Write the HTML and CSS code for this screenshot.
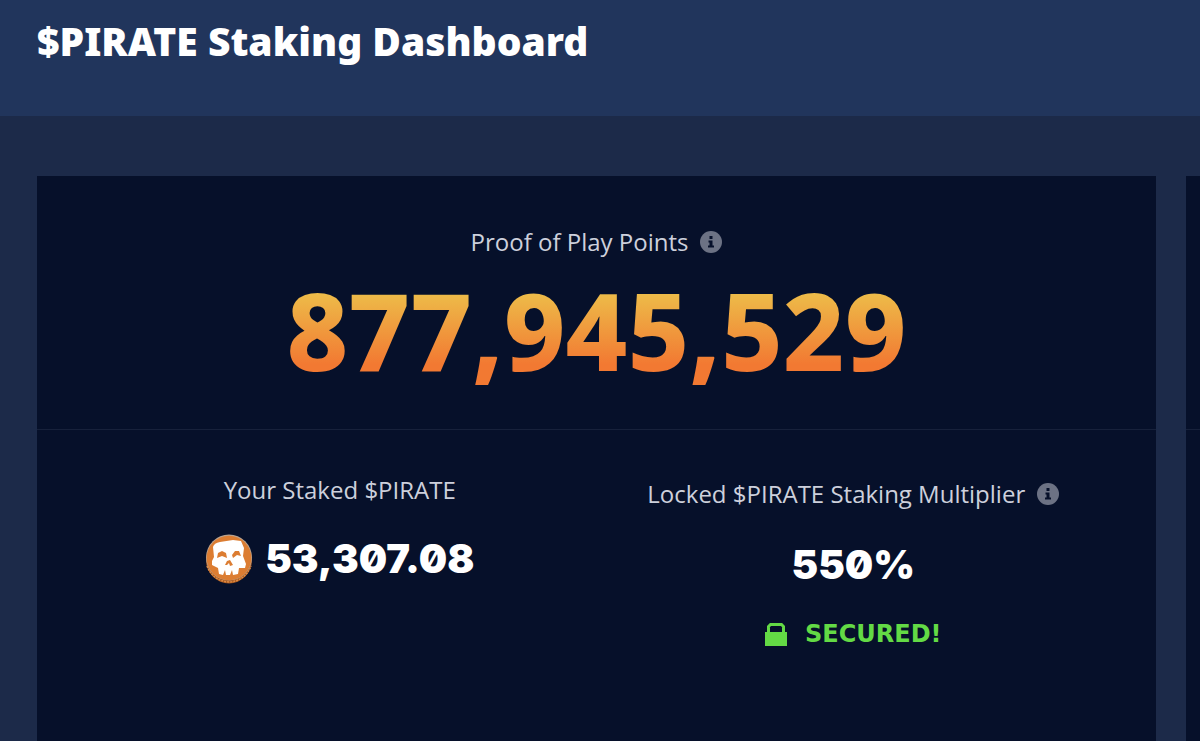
FILE: index.html
```html
<!DOCTYPE html>
<html lang="en">
<head>
<meta charset="utf-8">
<title>$PIRATE Staking Dashboard</title>
<link rel="stylesheet" href="styles.css">
</head>
<body>
<header class="header"><h1 class="title">$PIRATE Staking Dashboard</h1></header>
<main class="board">
  <section class="card">
    <div class="points">
      <h2 class="label">Proof of Play Points
        <button class="info" type="button" aria-label="About Proof of Play Points"><svg viewBox="0 0 22 22"><circle cx="11" cy="11" r="11" fill="#6c7284"/><path d="M9.500 5h3v3h-3zM8.500 9.500h4v5h1.500v2H8v-2h1.500v-3h-1z" fill="#06102a"/></svg></button>
      </h2>
      <p class="total">877,945,529</p>
    </div>
    <div class="stats">
      <div class="stat">
        <h2 class="label">Your Staked $PIRATE</h2>
        <p class="value">
          <svg class="coin" viewBox="0 0 48 50"><ellipse cx="24" cy="26" rx="23" ry="23.5" fill="#a95a20"/><path d="M2 32q6 15 22 16q16-1 22-16" fill="none" stroke="#df8b43" stroke-width="1.500" stroke-dasharray="2 1"/><circle cx="24" cy="23.500" r="23" fill="#b9a28e"/><circle cx="24" cy="24" r="22.300" fill="#dc7d32"/><path d="M8 13Q9 9 15 8L28 6L36 7L39 14L38 22L41 30L40 34L34 34L33 40L28 41L27 36L25 41L21 41L20 36L18 41L14 40L13 34L7 31L7 27L9 23Z" fill="#fff"/><path d="M12 24L13 19L17 17L21 19L22 24L17 22ZM27 21L30 17L34 17L36 22L32 21L28 24ZM20 31L22 27L25 26L28 31L25 32L24 29L22 31Z" fill="#dc7d32"/></svg>
          <span>53,307.08</span>
        </p>
      </div>
      <div class="stat stat-locked">
        <h2 class="label">Locked $PIRATE Staking Multiplier
          <button class="info" type="button" aria-label="About the staking multiplier"><svg viewBox="0 0 22 22"><circle cx="11" cy="11" r="11" fill="#6c7284"/><path d="M9.500 5h3v3h-3zM8.500 9.500h4v5h1.500v2H8v-2h1.500v-3h-1z" fill="#06102a"/></svg></button>
        </h2>
        <p class="value">550%</p>
        <p class="secured"><svg class="lock" viewBox="0 0 22 23"><path d="M3.500 10V3.500L5.500 1.500H16.500L18.500 3.500V10" fill="none" stroke="#63da45" stroke-width="3"/><path d="M0 9H22V23H0Z" fill="#63da45"/></svg><span>SECURED!</span></p>
      </div>
    </div>
  </section>
  <section class="card" aria-hidden="true"><div class="points"></div></section>
</main>
</body>
</html>
```
FILE: styles.css
```css
* { box-sizing: border-box; }
body {
  display: flex;
  flex-direction: column;
  min-height: 100vh;
  margin: 0;
  background: #1c2a49;
  color: #fff;
  font-family: "Noto Sans", "Open Sans", sans-serif;
}
h1, h2, p { margin: 0; }
.header { min-height: 116px; padding: 11px 37px; background: #21355c; }
.title { font-size: 39px; font-weight: 900; line-height: 60px; }
.board {
  display: grid;
  flex: 1;
  grid-template-columns: minmax(0, 1fr) 14px;
  gap: 30px;
  padding: 60px 0 0 37px;
}
.card { background: #06102a; }
.points {
  display: flex;
  flex-direction: column;
  align-items: center;
  min-height: 254px;
  padding-top: 44px;
  border-bottom: 1px solid #17213b;
}
.label {
  display: flex;
  align-items: center;
  gap: 12px;
  color: #cdd0dc;
  font-family: "Open Sans", sans-serif;
  font-size: 24px;
  font-weight: 500;
  line-height: 44px;
  white-space: nowrap;
}
.info { width: 22px; height: 22px; padding: 0; border: 0; background: none; }
.info svg { display: block; }
.total {
  background: linear-gradient(#edbc49 22%, #f27932 76%);
  background-clip: text;
  color: transparent;
  font-size: 107px;
  font-weight: 800;
  line-height: 132px;
}
.stats { display: grid; grid-template-columns: 1fr 1fr; padding: 38px 46px; }
.stat { display: flex; flex-direction: column; align-items: center; }
.value {
  display: flex;
  align-items: center;
  gap: 12px;
  margin-top: 22px;
  font: 900 40px/50px Inter, sans-serif;
  font-feature-settings: "zero";
}
.coin { width: 48px; height: 50px; }
.stat-locked { padding-top: 4px; }
.stat-locked .value { margin-top: 24px; }
.secured {
  display: flex;
  align-items: center;
  gap: 18px;
  margin-top: 28px;
  color: #63da45;
  font: 700 24px/32px "DejaVu Sans", sans-serif;
}
.lock { width: 22px; height: 23px; }
```
